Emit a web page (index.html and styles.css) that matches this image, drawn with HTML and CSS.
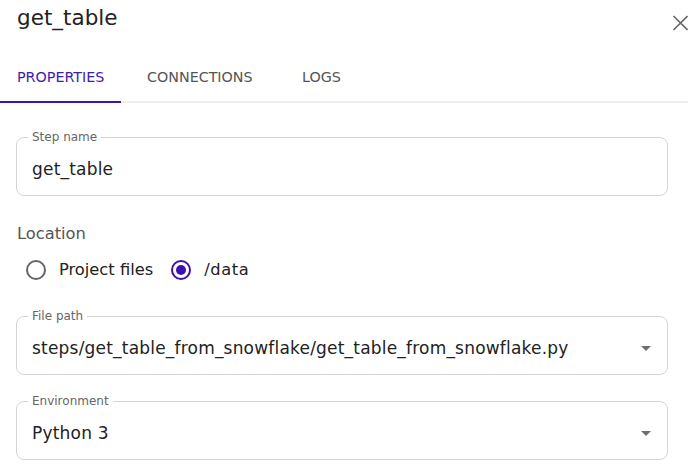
FILE: index.html
```html
<!DOCTYPE html>
<html lang="en">
<head>
<meta charset="utf-8">
<title>get_table</title>
<link rel="stylesheet" href="styles.css">
</head>
<body>
<div class="panel">
  <header class="header">
    <h1 class="title">get_table</h1>
    <svg class="close" width="16" height="16" viewBox="0 0 16 16" aria-label="Close">
      <path d="M1.5 1 L15.5 15 M15.5 1 L1.5 15" stroke="#666" stroke-width="1.6" fill="none"/>
    </svg>
  </header>
  <nav class="tabs">
    <div class="tab tab-active tab-properties">PROPERTIES</div>
    <div class="tab tab-connections">CONNECTIONS</div>
    <div class="tab tab-logs">LOGS</div>
  </nav>
  <main class="content">
    <fieldset class="field field-first">
      <legend class="field-label">Step name</legend>
      <div class="field-row"><span class="field-value">get_table</span></div>
    </fieldset>

    <div class="location-label">Location</div>
    <div class="radio-group">
      <label class="radio-option">
        <span class="radio"></span>
        <span class="radio-text">Project files</span>
      </label>
      <label class="radio-option">
        <span class="radio radio-checked"><span class="radio-dot"></span></span>
        <span class="radio-text radio-text-data">/data</span>
      </label>
    </div>

    <fieldset class="field field-path">
      <legend class="field-label">File path</legend>
      <div class="field-row">
        <span class="field-value">steps/get_table_from_snowflake/get_table_from_snowflake.py</span>
        <svg class="arrow" width="10" height="5" viewBox="0 0 10 5"><path d="M0 0 H10 L5 5 Z" fill="#707070"/></svg>
      </div>
    </fieldset>

    <fieldset class="field field-env">
      <legend class="field-label">Environment</legend>
      <div class="field-row">
        <span class="field-value">Python 3</span>
        <svg class="arrow" width="10" height="5" viewBox="0 0 10 5"><path d="M0 0 H10 L5 5 Z" fill="#707070"/></svg>
      </div>
    </fieldset>
  </main>
</div>
</body>
</html>
```
FILE: styles.css
```css
* { box-sizing: border-box; }

html, body {
  margin: 0;
  padding: 0;
  background: #ffffff;
}

body {
  font-family: "DejaVu Sans", "Noto Sans", sans-serif;
  color: #222222;
  width: 688px;
  overflow: hidden;
}

.panel {
  width: 688px;
}

.header {
  height: 54px;
  display: flex;
  justify-content: space-between;
  align-items: flex-start;
  padding: 4px 0 0 17px;
}

.title {
  margin: 0;
  font-size: 21.5px;
  line-height: 28px;
  font-weight: normal;
  color: #222222;
}

.close {
  margin-top: 11px;
  margin-right: 0;
  display: block;
}

.tabs {
  display: flex;
  border-bottom: 2px solid #eeeeee;
  height: 49px;
}

.tab {
  height: 49px;
  line-height: 47px;
  font-size: 14.3px;
  color: #555555;
  border-bottom: 2px solid transparent;
  margin-bottom: -2px;
}

.tab-properties {
  width: 121px;
  padding-left: 17px;
}

.tab-connections {
  margin-left: 26px;
  width: 155px;
}

.tab-logs {
  width: 60px;
}

.tab-active {
  color: #401cae;
  border-bottom-color: #3f12b2;
}

.content {
  padding: 0 20px 0 16px;
}

.field {
  margin: 0;
  border: 1px solid #d4d4d4;
  border-radius: 8px;
  padding: 13px 16px 14px 15px;
  min-width: 0;
}

.field-first {
  margin-top: 27px;
}

.field-path {
  margin-top: 19px;
}

.field-env {
  margin-top: 19px;
}

.field-label {
  font-size: 12px;
  line-height: 14px;
  color: #666666;
  padding: 0 4px;
  margin-left: -4px;
}

.field-row {
  display: flex;
  align-items: center;
  justify-content: space-between;
  height: 24px;
}

.field-value {
  font-size: 17px;
  line-height: 24px;
  letter-spacing: 0.2px;
  color: #222222;
  white-space: nowrap;
}

.arrow {
  display: block;
  flex: none;
  margin-top: 0;
}

.location-label {
  margin-top: 26px;
  font-size: 16.3px;
  line-height: 24px;
  color: #555555;
  padding-left: 1px;
}

.radio-group {
  margin-top: 2px;
  height: 42px;
  display: flex;
  align-items: center;
  gap: 18px;
  padding-left: 10px;
  padding-top: 1px;
}

.radio-option {
  display: flex;
  align-items: center;
  gap: 13px;
}

.radio {
  width: 20px;
  height: 20px;
  border-radius: 50%;
  border: 2px solid #666666;
  display: flex;
  align-items: center;
  justify-content: center;
}

.radio-checked {
  border-color: #3c10b0;
}

.radio-dot {
  width: 10px;
  height: 10px;
  border-radius: 50%;
  background: #3c10b0;
}

.radio-text {
  font-size: 16.3px;
  line-height: 24px;
  color: #222222;
}

.radio-text-data {
  letter-spacing: 0.6px;
}
```
